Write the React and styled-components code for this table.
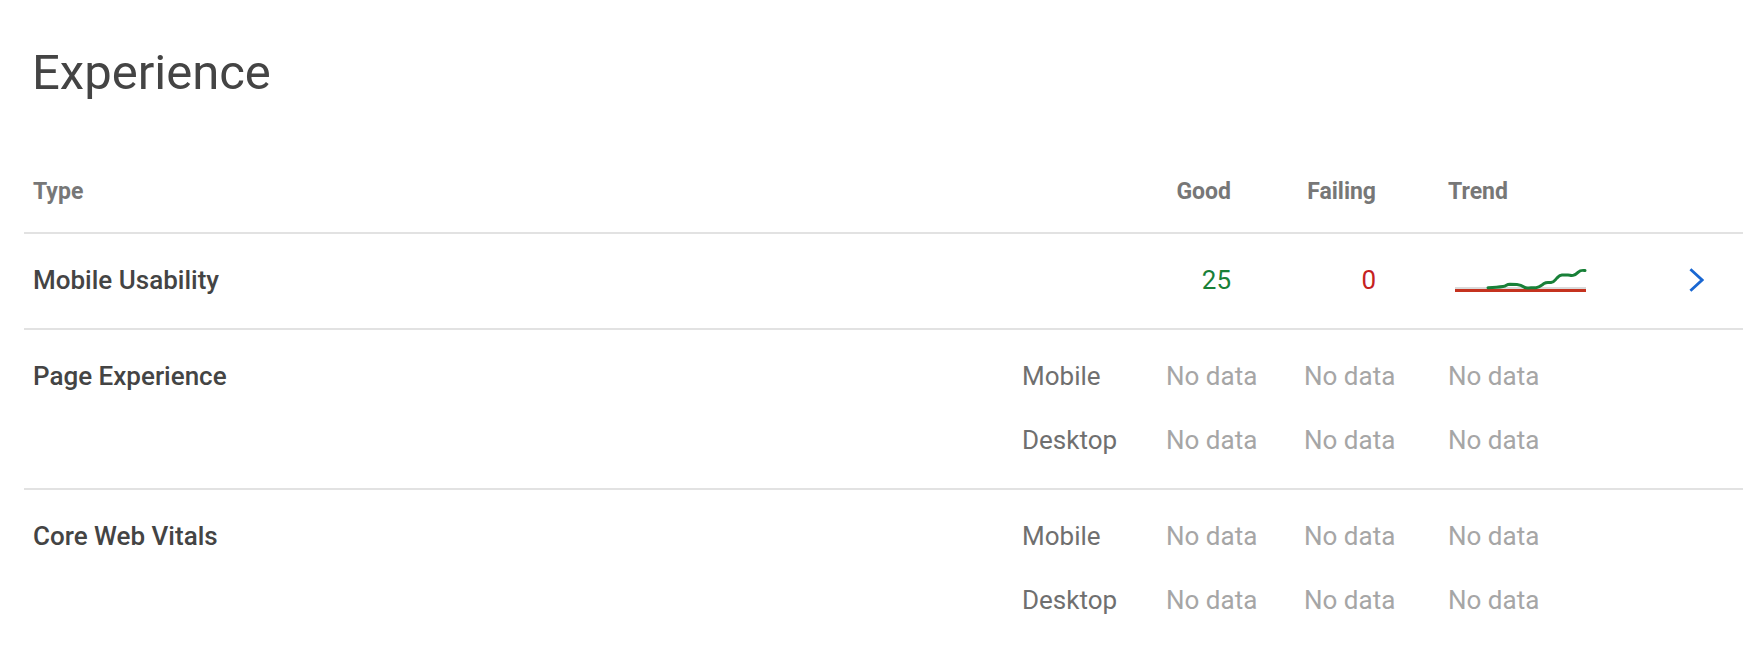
import React from 'react';
import styled, { createGlobalStyle } from 'styled-components';

const GlobalStyle = createGlobalStyle`
  html, body {
    margin: 0;
    padding: 0;
    background: #fff;
  }
  body {
    font-family: Roboto, "Liberation Sans", Arial, sans-serif;
    -webkit-font-smoothing: antialiased;
  }
`;

const columns = '1fr 144px 138px 144px 241px 15px';

const Page = styled.div`
  padding: 45px 14px 0 24px;
  min-height: 667px;
  box-sizing: border-box;
`;

const Title = styled.h1`
  margin: 0 0 0 8px;
  font-size: 49px;
  line-height: 56px;
  font-weight: 400;
  color: #444;
`;

const Table = styled.div`
  margin-top: 75px;
  display: flex;
  flex-direction: column;
`;

const HeaderRow = styled.div`
  display: grid;
  grid-template-columns: ${columns};
  padding: 0 39px 24px 9px;
  border-bottom: 2px solid #e2e2e2;
  font-size: 23px;
  line-height: 32px;
  font-weight: 700;
  color: #777;
`;

const HeadCell = styled.div`
  white-space: nowrap;
  padding-right: ${(p) => p.$pad || 0}px;
  text-align: ${(p) => (p.$right ? 'right' : 'left')};
`;

const SummaryRow = styled.div`
  display: grid;
  grid-template-columns: ${columns};
  align-items: center;
  min-height: 91px;
  padding: 0 39px 3px 9px;
  border-bottom: 2px solid #e2e2e2;
  font-size: 26px;
  line-height: 32px;
`;

const Group = styled.div`
  display: grid;
  grid-template-columns: ${columns};
  grid-auto-rows: 64px;
  align-items: center;
  padding: 14px 39px 16px 9px;
  border-bottom: ${(p) => (p.$last ? 'none' : '2px solid #e2e2e2')};
  font-size: 26px;
  line-height: 32px;
`;

const TypeName = styled.div`
  font-weight: 500;
  color: #444;
  white-space: nowrap;
  align-self: ${(p) => (p.$top ? 'start' : 'center')};
  padding-top: ${(p) => (p.$top ? '16px' : 0)};
  grid-row: ${(p) => (p.$span ? `span ${p.$span}` : 'auto')};
`;

const Device = styled.div`
  color: #6f6f6f;
  white-space: nowrap;
`;

const Value = styled.div`
  white-space: nowrap;
  text-align: right;
  padding-right: ${(p) => p.$pad}px;
  color: ${(p) => p.$color};
`;

const NoData = styled.div`
  white-space: nowrap;
  color: #a6a6a6;
`;

const ChartBox = styled.div`
  display: flex;
  align-items: center;
  padding-left: 7px;
`;

const Chevron = styled.div`
  display: flex;
  align-items: center;
  cursor: pointer;
`;

const TrendChart = () => (
  <svg width="132" height="28" viewBox="0 0 132 28">
    <line x1="0" y1="22" x2="131" y2="22" stroke="#b5b5b5" strokeWidth="1" />
    <line x1="0" y1="24.5" x2="131" y2="24.5" stroke="#c5321f" strokeWidth="3" />
    <path
      d="M33 21.7 C40 21.5 44 21.2 48 20.6 S51 18.4 55 18.3 L62 18.4 C65 18.6 67 19.4 69 21 S73 21.8 76 21.8 L81 21.7 C84 21.4 86 19.6 89 17.6 S93 16.6 96 16.6 C99 16.4 100 14 102 12 S104 9.2 107 9 L113 9.1 C115 9.2 116 9.8 118 9.4 S121 8.4 123 6.4 S126 4 130 4.6"
      fill="none"
      stroke="#188038"
      strokeWidth="3"
      strokeLinejoin="round"
      strokeLinecap="round"
    />
  </svg>
);

const ChevronIcon = () => (
  <svg width="16" height="26" viewBox="0 0 16 26">
    <polyline points="1.5,1.5 14,13 1.5,24.5" fill="none" stroke="#1967d2" strokeWidth="3" />
  </svg>
);

const devices = ['Mobile', 'Desktop'];

const DeviceGroup = ({ name, last }) => (
  <Group $last={last}>
    <TypeName $top $span={devices.length}>{name}</TypeName>
    {devices.map((d) => (
      <React.Fragment key={d}>
        <Device>{d}</Device>
        <NoData>No data</NoData>
        <NoData>No data</NoData>
        <NoData>No data</NoData>
        <span />
      </React.Fragment>
    ))}
  </Group>
);

export default function App() {
  return (
    <>
      <GlobalStyle />
      <Page>
        <Title>Experience</Title>
        <Table>
          <HeaderRow>
            <HeadCell>Type</HeadCell>
            <HeadCell />
            <HeadCell $right $pad={73}>Good</HeadCell>
            <HeadCell $right $pad={72}>Failing</HeadCell>
            <HeadCell>Trend</HeadCell>
            <HeadCell />
          </HeaderRow>
          <SummaryRow>
            <TypeName>Mobile Usability</TypeName>
            <span />
            <Value $pad={73} $color="#188038">25</Value>
            <Value $pad={72} $color="#c5221f">0</Value>
            <ChartBox>
              <TrendChart />
            </ChartBox>
            <Chevron>
              <ChevronIcon />
            </Chevron>
          </SummaryRow>
          <DeviceGroup name="Page Experience" />
          <DeviceGroup name="Core Web Vitals" last />
        </Table>
      </Page>
    </>
  );
}
